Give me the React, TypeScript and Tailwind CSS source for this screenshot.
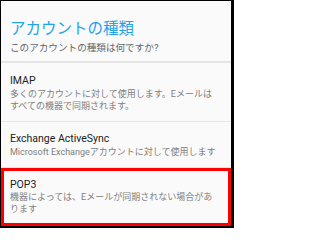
import React from "react";

const items = [
  {
    title: "IMAP",
    desc: "多くのアカウントに対して使用します。Eメールはすべての機器で同期されます。",
  },
  {
    title: "Exchange ActiveSync",
    desc: "Microsoft Exchangeアカウントに対して使用します",
  },
  {
    title: "POP3",
    desc: "機器によっては、Eメールが同期されない場合があります",
  },
];

export default function App() {
  return (
    <div
      className="w-[234px] h-[228px] bg-black pt-px pl-px pr-[3px] pb-[2px]"
      style={{ fontFamily: 'Roboto, "Noto Sans CJK JP", sans-serif' }}
    >
      <div className="relative w-[230px] h-[225px] bg-[#fafafa] overflow-hidden">
        <div className="pl-[9px] pt-[18px]">
          <div className="text-[15.5px] leading-[20px] text-[#24a3ea]">アカウントの種類</div>
          <div className="mt-[3px] text-[9.6px] leading-[12px] text-[#666666]">
            このアカウントの種類は何ですか?
          </div>
        </div>
        <div className="mt-[7px] h-[2px] bg-[#e6e6e6]" />
        <div className="pl-[9px] pr-[11px] pt-[11px] pb-[9px]">
          <div className="text-[10.5px] leading-[14px] text-[#222222]">{items[0].title}</div>
          <div className="text-[9px] leading-[12px] text-[#808080]">{items[0].desc}</div>
        </div>
        <div className="h-px bg-[#e6e6e6]" />
        <div className="pl-[9px] pr-[11px] pt-[10px] pb-[9px]">
          <div className="text-[10.5px] leading-[14px] text-[#222222]">{items[1].title}</div>
          <div className="text-[9px] leading-[12px] text-[#808080]">{items[1].desc}</div>
        </div>
        <div className="h-px bg-[#e6e6e6]" />
        <div className="pl-[9px] pr-[11px] pt-[10px]">
          <div className="text-[10.5px] leading-[14px] text-[#222222]">{items[2].title}</div>
          <div className="text-[9px] leading-[11.5px] text-[#808080]">{items[2].desc}</div>
        </div>
        <div className="absolute left-0 top-[167px] w-[230px] h-[58px] border-[3px] border-[#ff0000]" />
      </div>
    </div>
  );
}
